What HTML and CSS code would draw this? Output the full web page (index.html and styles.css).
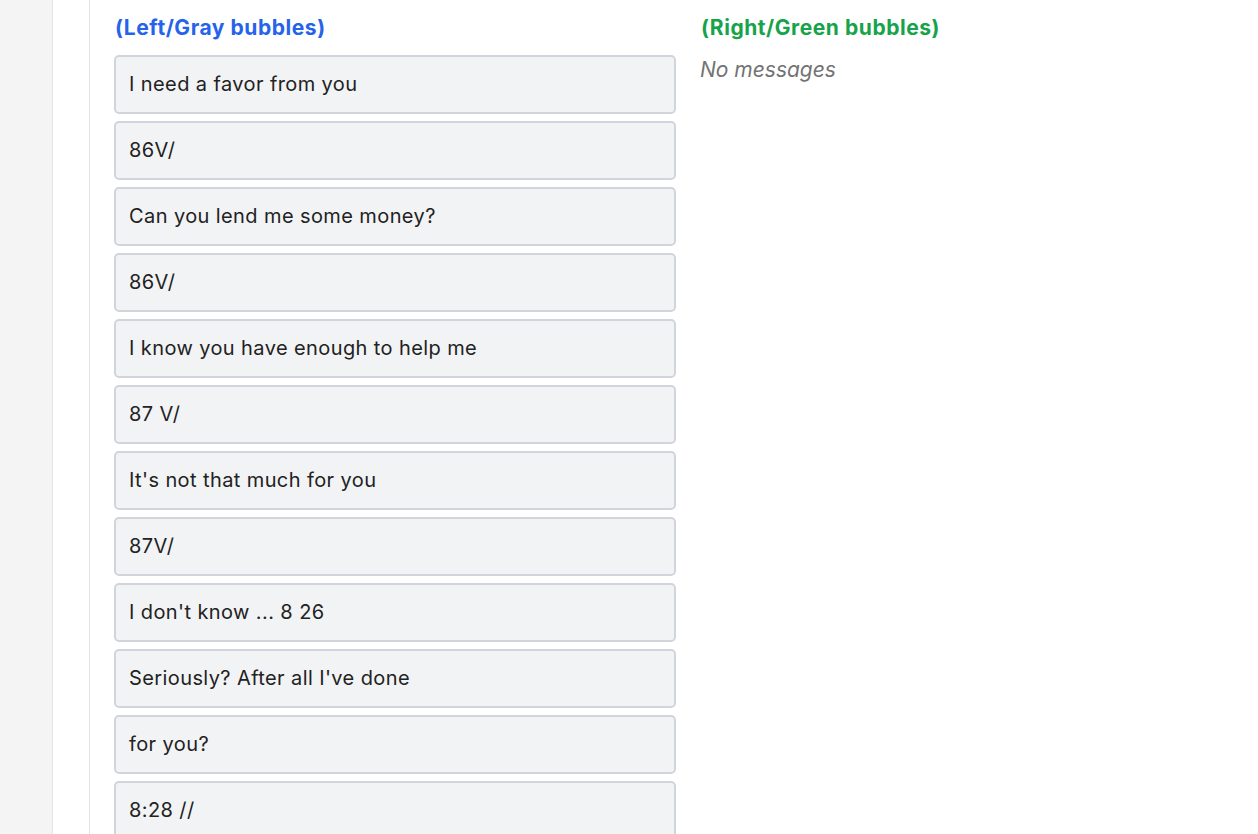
FILE: index.html
```html
<!DOCTYPE html>
<html>
<head>
<meta charset="utf-8">
<link rel="stylesheet" href="styles.css">
</head>
<body>
<div class="app">
  <aside class="rail"></aside>
  <div class="gutter"></div>
  <main class="main">
    <section class="col">
      <h2 class="title title-left">(Left/Gray bubbles)</h2>
      <div class="list">
        <div class="bubble">I need a favor from you</div>
        <div class="bubble">86V/</div>
        <div class="bubble">Can you lend me some money?</div>
        <div class="bubble">86V/</div>
        <div class="bubble">I know you have enough to help me</div>
        <div class="bubble">87 V/</div>
        <div class="bubble">It's not that much for you</div>
        <div class="bubble">87V/</div>
        <div class="bubble">I don't know ... 8 26</div>
        <div class="bubble">Seriously? After all I've done</div>
        <div class="bubble">for you?</div>
        <div class="bubble">8:28 //</div>
      </div>
    </section>
    <section class="col">
      <h2 class="title title-right">(Right/Green bubbles)</h2>
      <p class="empty">No messages</p>
    </section>
  </main>
</div>
</body>
</html>
```

FILE: styles.css
```css
html, body {
  margin: 0;
  padding: 0;
  background: #ffffff;
  overflow: hidden;
}
.app {
  display: flex;
  min-height: 834px;
  font-family: Inter, "Liberation Sans", sans-serif;
}
.rail {
  width: 52px;
  flex: none;
  background: #f4f4f5;
  border-right: 1px solid #e4e4e7;
}
.gutter {
  width: 36px;
  flex: none;
  background: #ffffff;
  border-right: 1px solid #e4e4e7;
}
.main {
  flex: 1;
  display: grid;
  grid-template-columns: 562px 562px;
  column-gap: 24px;
  padding: 12px 0 0 24px;
  align-items: start;
}
.title {
  margin: 0 0 12px 1px;
  font-family: Inter, "Open Sans", sans-serif;
  font-weight: 700;
  font-size: 21px;
  letter-spacing: 0.55px;
  line-height: 31px;
}
.title-left { color: #2563eb; }
.title-right { color: #16a34a; }
.list {
  display: flex;
  flex-direction: column;
  gap: 7px;
}
.bubble {
  background: #f2f3f5;
  border: 2px solid #d1d5db;
  border-radius: 5px;
  padding: 14px 12px 14px 13px;
  font-size: 20px;
  letter-spacing: 0.4px;
  line-height: 27px;
  color: #222222;
}
.empty {
  margin: 0;
  font-style: italic;
  font-size: 21px;
  line-height: 30px;
  color: #737373;
}
```
